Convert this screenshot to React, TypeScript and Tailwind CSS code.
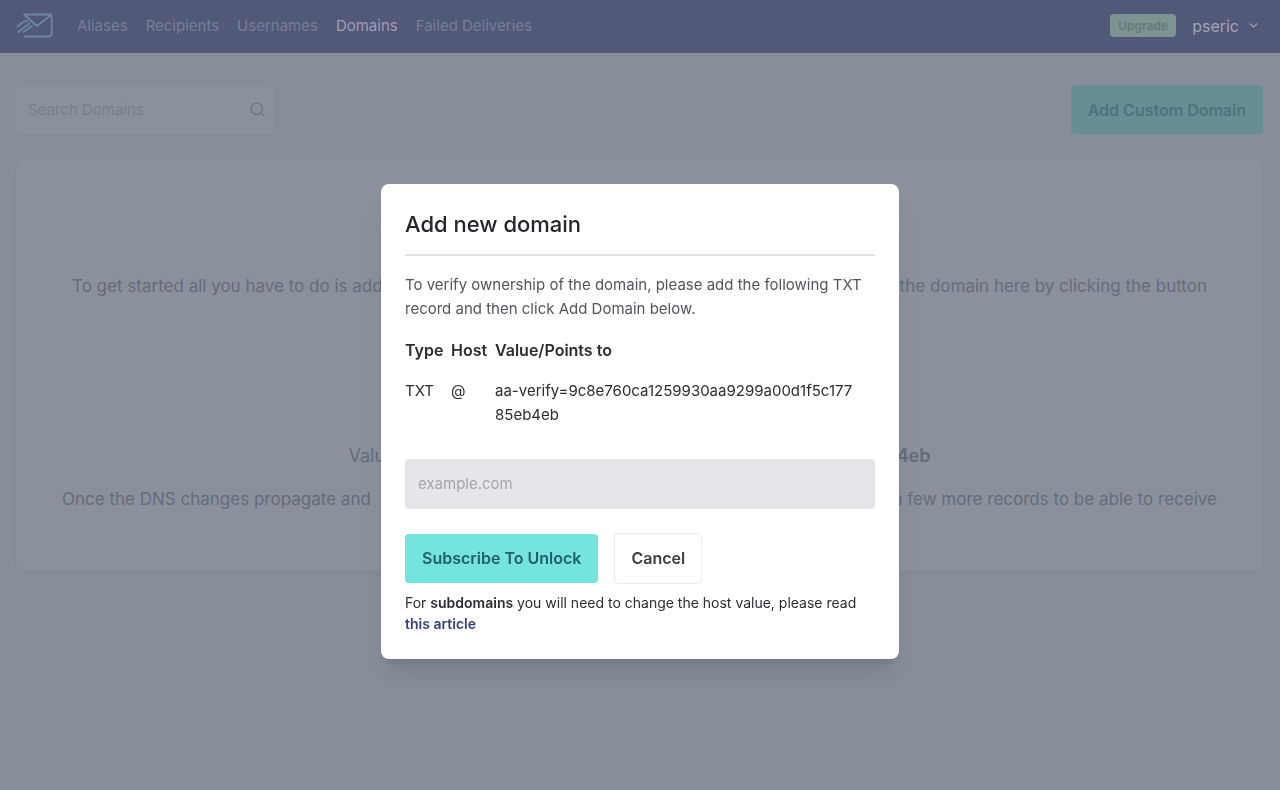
import { ChevronDown, Search } from 'lucide-react';

const links = ['Aliases', 'Recipients', 'Usernames', 'Domains', 'Failed Deliveries'];

function Logo() {
  return (
    <svg viewBox="0 0 38 26" className="h-[26px] w-[38px]" fill="none" stroke="#6d87a1" strokeWidth="1.8" strokeLinejoin="round" aria-hidden="true">
      <path d="M7.5 1.5H33.5Q35.7 1.5 35.7 4V20.5Q35.7 23.5 32.5 23.5H8" />
      <path d="M8.5 2L21 13L34.5 2.5" />
      <path d="M1 14L6.5 9.5Q9 7.5 12 8" />
      <path d="M1.5 19.5L14 10" />
      <path d="M7 19.5L16.5 12.5" />
    </svg>
  );
}

function Header() {
  return (
    <header className="flex h-[53px] items-center justify-between bg-[#525877] pb-0.5 pl-4 pr-5">
      <div className="flex items-center gap-[23px]">
        <a href="#home" aria-label="Home">
          <Logo />
        </a>
        <nav className="flex gap-[18px] text-[15px]">
          {links.map((link) => (
            <a key={link} href="#nav" className={link === 'Domains' ? 'text-[#a09cb4]' : 'text-[#777f98]'}>
              {link}
            </a>
          ))}
        </nav>
      </div>
      <div className="flex items-center gap-4">
        <a href="#upgrade" className="flex h-[23px] items-center rounded bg-[#7c9491] px-2 text-[12px] font-semibold text-[#627b79]">
          Upgrade
        </a>
        <button type="button" className="flex items-center gap-2 text-[#a3a3ba]">
          pseric
          <ChevronDown size={13} strokeWidth={2.5} />
        </button>
      </div>
    </header>
  );
}

function Page() {
  return (
    <main className="pl-4 pr-[17px] pt-8">
      <div className="flex items-center justify-between">
        <div className="flex h-12 w-[258px] items-center justify-between rounded bg-[#8a919c] pl-3 pr-2 shadow-[0_1px_2px_#828995]">
          <input
            type="search"
            aria-label="Search Domains"
            placeholder="Search Domains"
            className="w-[180px] bg-transparent text-[15px] placeholder:text-[#787f8b] focus:outline-none"
          />
          <Search size={17} strokeWidth={1.8} className="text-[#6c7482]" />
        </div>
        <button type="button" className="h-[49px] rounded bg-[#678e94] px-[17px] font-semibold text-[#4d747c]">
          Add Custom Domain
        </button>
      </div>
      <section className="mt-[26px] rounded-lg bg-[#8a919c] pb-[58px] pt-[113px] text-[17px] leading-[27px] text-[#656c7a] shadow-[0_2px_4px_#828995]">
        <p className="mb-[142px] flex justify-between px-14">
          <span>To get started all you have to do is add</span>
          <span>the domain here by clicking the button</span>
        </p>
        <p className="mx-auto mb-[17px] flex max-w-[582px] justify-between text-[18px]">
          <span>Value</span>
          <b className="font-semibold">4eb</b>
        </p>
        <p className="flex justify-between px-[46px]">
          <span>Once the DNS changes propagate and</span>
          <span>a few more records to be able to receive</span>
        </p>
      </section>
    </main>
  );
}

function DomainDialog() {
  return (
    <div className="fixed inset-0 flex items-center justify-center pt-[52px]">
      <div role="dialog" aria-modal="true" aria-labelledby="dialog-title" className="w-full max-w-[518px] rounded-lg bg-white px-6 pb-[25px] pt-6 text-[#2c2c33] shadow-xl">
        <h2 id="dialog-title" className="border-b-2 border-[#e3e3e6] pb-[14px] text-[22px] leading-8 font-medium text-[#25252d]">
          Add new domain
        </h2>
        <p className="mt-[17px] text-[15px] leading-6 text-[#54545c]">
          To verify ownership of the domain, please add the following TXT record and then click Add Domain below.
        </p>
        <table className="mt-[17px] w-full text-left">
          <thead>
            <tr>
              <th className="w-[46px] pb-[17px] font-semibold">Type</th>
              <th className="w-11 pb-[17px] font-semibold">Host</th>
              <th className="pb-[17px] font-semibold">Value/Points to</th>
            </tr>
          </thead>
          <tbody className="align-top text-[15px] leading-6">
            <tr>
              <td>TXT</td>
              <td>@</td>
              <td className="break-all pr-4">aa-verify=9c8e760ca1259930aa9299a00d1f5c17785eb4eb</td>
            </tr>
          </tbody>
        </table>
        <input
          type="text"
          aria-label="Domain"
          placeholder="example.com"
          className="mt-8 h-[50px] w-full rounded bg-[#e6e6ea] px-[13px] text-[15px] placeholder:text-[#a5a6ab] focus:outline-none"
        />
        <div className="mt-6 flex items-center gap-4">
          <button type="button" className="h-[49px] rounded bg-[#74e4df] px-[17px] font-semibold text-[#235f6b]">
            Subscribe To Unlock
          </button>
          <button type="button" className="h-[51px] rounded border border-[#ededf0] px-4 font-semibold text-[#3c3c43]">
            Cancel
          </button>
        </div>
        <p className="mt-2 text-[14px] leading-[21px]">
          For <b className="font-semibold">subdomains</b> you will need to change the host value, please read{' '}
          <a href="#article" className="font-semibold text-[#37407c]">
            this article
          </a>
        </p>
      </div>
    </div>
  );
}

export default function App() {
  return (
    <div className="min-h-screen bg-[#878e9a] font-['Inter',sans-serif] text-[16px] leading-6">
      <Header />
      <Page />
      <DomainDialog />
    </div>
  );
}
